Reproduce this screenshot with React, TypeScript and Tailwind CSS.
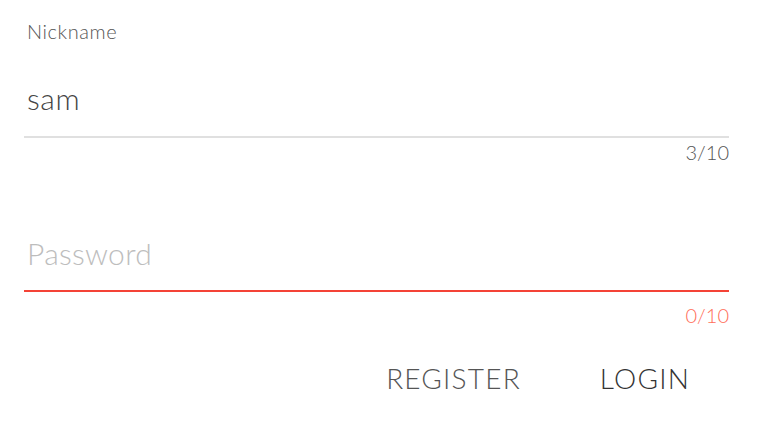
export default function App() {
    return (
        <div className="w-[764px] h-[442px] bg-white pl-6 pr-[35px] font-['Lato','Open_Sans',sans-serif] font-light">

            {/* NICKNAME */}
            <div className="pt-[17px]">
                <label className="block pl-[3px] text-[20px] leading-[28px] text-[#555] tracking-[0.6px]">Nickname</label>
                <div className="mt-[39px] h-[54px] border-b-2 border-[#e0e0e0] pl-[3px]">
                    <span className="text-[30px] leading-[28px] text-[#444] tracking-[0.6px]">sam</span>
                </div>
                <div className="h-[28px] text-right text-[20px] leading-[28px] text-[#555]">3/10</div>
            </div>

            {/* PASSWORD */}
            <div className="mt-[69px]">
                <div className="h-[57px] border-b-2 border-[#f44336] pl-[3px]">
                    <span className="text-[30px] leading-[36px] text-[#bdbdbd] tracking-[0.3px]">Password</span>
                </div>
                <div className="mt-[9px] h-[28px] text-right text-[20px] leading-[28px] text-[#ff6e5a]">0/10</div>
            </div>

            {/* ACTIONS */}
            <div className="mt-[31px] flex justify-end gap-[79px] pr-[39px]">
                <button className="text-[28px] leading-[36px] text-[#555] tracking-[1.2px]">REGISTER</button>
                <button className="text-[28px] leading-[36px] text-[#333] tracking-[1.2px]">LOGIN</button>
            </div>
        </div>
    );
}
